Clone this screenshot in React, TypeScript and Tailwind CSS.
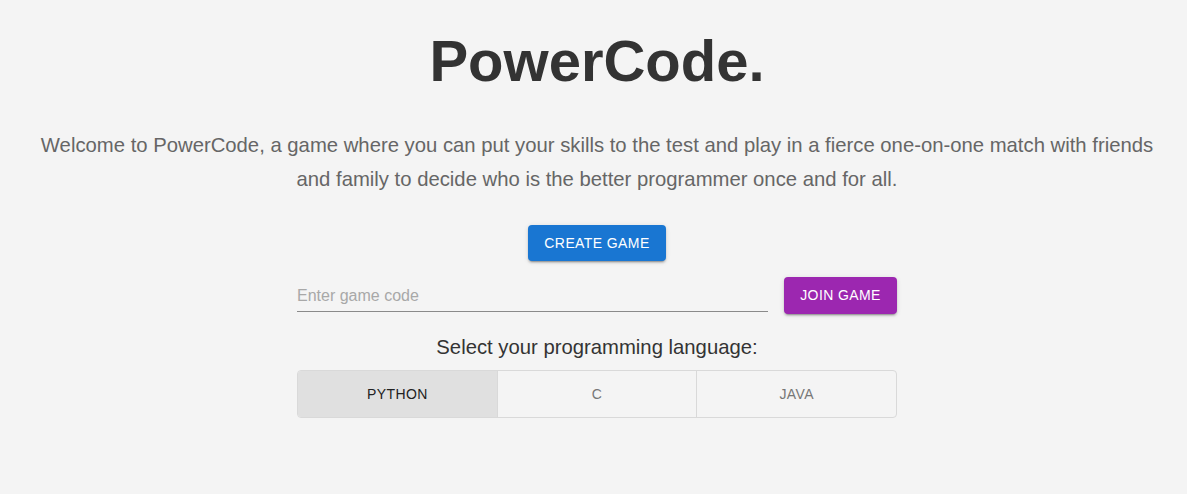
import React, { useState } from "react";

export default function App() {
  const [lang, setLang] = useState("python");
  const langs = [
    { id: "python", label: "PYTHON" },
    { id: "c", label: "C" },
    { id: "java", label: "JAVA" },
  ];
  return (
    <div
      className="min-h-[494px] w-full bg-[#f4f4f4] flex flex-col items-center pl-[7px]"
      style={{ fontFamily: '"Liberation Sans", Arial, sans-serif' }}
    >
      <h1 className="mt-[27px] text-[58px] leading-[67px] font-bold text-[#333333]">
        PowerCode.
      </h1>
      <p className="mt-[34px] text-[20.3px] leading-[34px] text-[#666666] text-center">
        Welcome to PowerCode, a game where you can put your skills to the test and play in a fierce one-on-one match with friends
        <br />
        and family to decide who is the better programmer once and for all.
      </p>
      <button className="mt-[29px] h-[36px] w-[138px] rounded-[4px] bg-[#1976d2] text-white text-[14px] tracking-[0.4px] shadow-[0_3px_1px_-2px_rgba(0,0,0,0.2),0_2px_2px_0_rgba(0,0,0,0.14),0_1px_5px_0_rgba(0,0,0,0.12)]">
        CREATE GAME
      </button>
      <div className="mt-[16px] w-[600px] flex items-center gap-[16px]">
        <div className="flex-1 h-[32px] border-b border-[#8a8a8a] flex items-end pb-[3px]">
          <input
            placeholder="Enter game code"
            className="w-full bg-transparent outline-none text-[16px] text-[#333] placeholder:text-[#a8a8a8]"
          />
        </div>
        <button className="h-[37px] w-[113px] rounded-[4px] bg-[#9c27b0] text-white text-[14px] tracking-[0.4px] shadow-[0_3px_1px_-2px_rgba(0,0,0,0.2),0_2px_2px_0_rgba(0,0,0,0.14),0_1px_5px_0_rgba(0,0,0,0.12)]">
          JOIN GAME
        </button>
      </div>
      <div className="mt-[21px] text-[20.3px] leading-[24px] text-[#333333]">
        Select your programming language:
      </div>
      <div className="mt-[11px] w-[600px] h-[48px] flex rounded-[4px] border border-[#d9d9d9] overflow-hidden">
        {langs.map((l, i) => (
          <button
            key={l.id}
            onClick={() => setLang(l.id)}
            className={
              "flex-1 h-full text-[14px] tracking-[0.4px] " +
              (i > 0 ? "border-l border-[#d9d9d9] " : "") +
              (lang === l.id
                ? "bg-[#e0e0e0] text-[#222222]"
                : "bg-transparent text-[#777777]")
            }
          >
            {l.label}
          </button>
        ))}
      </div>
    </div>
  );
}
